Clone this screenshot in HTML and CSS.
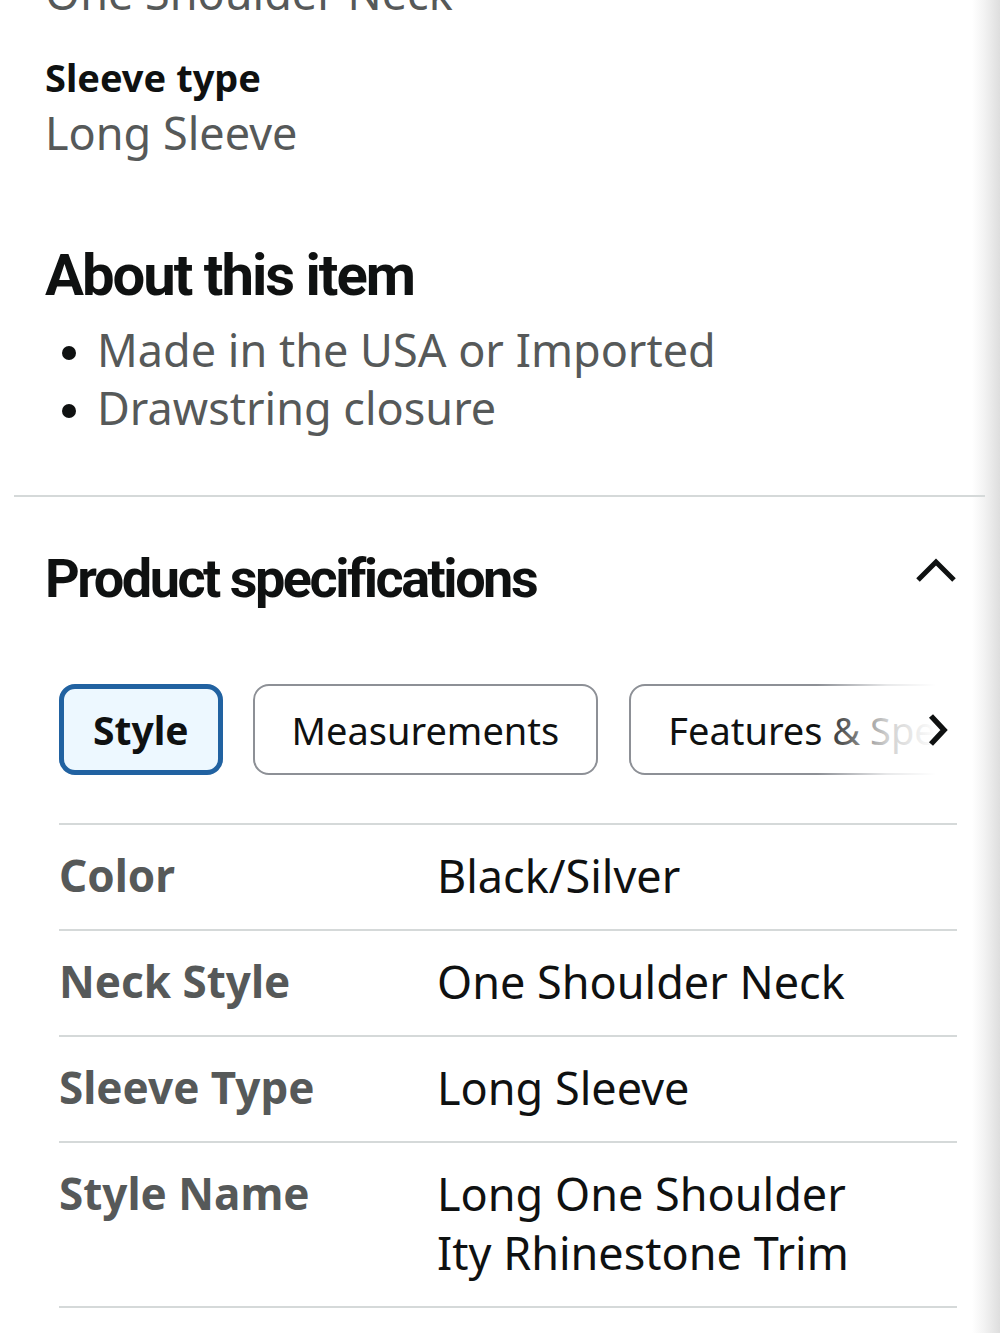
FILE: index.html
```html
<!DOCTYPE html>
<html lang="en">
<head>
<meta charset="utf-8">
<title>Product details</title>
<link rel="stylesheet" href="styles.css">
</head>
<body>
<div class="page">
  <div class="attrs">
    <div class="attr-value attr-cut">One Shoulder Neck</div>
    <div class="attr">
      <div class="attr-label">Sleeve type</div>
      <div class="attr-value">Long Sleeve</div>
    </div>
  </div>

  <section class="about">
    <h2 class="heading">About this item</h2>
    <ul class="bullets">
      <li>Made in the USA or Imported</li>
      <li>Drawstring closure</li>
    </ul>
  </section>

  <hr class="divider">

  <section class="specs">
    <div class="specs-head">
      <h2 class="heading heading-specs">Product specifications</h2>
      <svg class="chev-up" width="42" height="28" viewBox="0 0 42 28" aria-hidden="true">
        <path d="M3 24 L21 6 L39 24" fill="none" stroke="#0f1111" stroke-width="5"/>
      </svg>
    </div>

    <div class="tabs-wrap">
      <div class="tabs">
        <button class="tab tab-active">Style</button>
        <button class="tab tab-mid">Measurements</button>
        <button class="tab tab-last">Features &amp; Specs</button>
      </div>
      <div class="tabs-fade">
        <svg class="chev-right" width="22" height="34" viewBox="0 0 22 34" aria-hidden="true">
          <path d="M4 3 L17 17 L4 31" fill="none" stroke="#0f1111" stroke-width="5.5"/>
        </svg>
      </div>
    </div>

    <div class="table">
      <div class="row">
        <div class="cell-label">Color</div>
        <div class="cell-value">Black/Silver</div>
      </div>
      <div class="row">
        <div class="cell-label">Neck Style</div>
        <div class="cell-value">One Shoulder Neck</div>
      </div>
      <div class="row">
        <div class="cell-label">Sleeve Type</div>
        <div class="cell-value">Long Sleeve</div>
      </div>
      <div class="row">
        <div class="cell-label">Style Name</div>
        <div class="cell-value">Long One Shoulder<br>Ity Rhinestone Trim</div>
      </div>
    </div>
  </section>
</div>
</body>
</html>
```

FILE: styles.css
```css
html, body {
  margin: 0;
  padding: 0;
}
body {
  font-family: "Noto Sans", "Open Sans", sans-serif;
  color: #0f1111;
  background: linear-gradient(to right, #ffffff 0, #ffffff 972px, #f3f3f3 984px, #dedede 1000px);
  height: 1333px;
  overflow: hidden;
}
.page {
  padding: 0 0 0 45px;
}

.attrs {
  margin-top: -36px;
}
.attr-value {
  font-size: 45px;
  line-height: 57px;
  color: #565959;
}
.attr {
  margin-top: 29px;
}
.attr-label {
  font-size: 38px;
  font-weight: 700;
  line-height: 54px;
  color: #0f1111;
}

.about {
  margin-top: 84px;
}
.heading {
  margin: 0;
  font-family: "Roboto", "Liberation Sans", sans-serif;
  font-weight: 700;
  font-size: 58px;
  line-height: 60px;
  letter-spacing: -2px;
  color: #0f1111;
}
.bullets {
  margin: 16px 0 0 0;
  padding: 0 0 0 52px;
  font-size: 45px;
  line-height: 58px;
  color: #565959;
}
.bullets li::marker {
  color: #0f1111;
  font-size: 40px;
}

.divider {
  margin: 58px 15px 0 -31px;
  border: 0;
  height: 2px;
  background: #d5d9d9;
}

.specs-head {
  display: flex;
  align-items: flex-start;
  justify-content: space-between;
  margin-top: 52px;
  padding-right: 43px;
}
.heading-specs {
  font-size: 54px;
  letter-spacing: -2.5px;
}
.chev-up {
  display: block;
  margin-top: 7px;
}

.tabs-wrap {
  position: relative;
  margin: 75px 43px 0 14px;
  overflow: hidden;
}
.tabs {
  display: flex;
  gap: 30px;
  white-space: nowrap;
}
.tab {
  flex: none;
  height: 91px;
  padding: 0 37px;
  font-family: "Noto Sans", "Open Sans", sans-serif;
  font-size: 38px;
  color: #0f1111;
  background: #fff;
  border: 2px solid #8d9096;
  border-radius: 16px;
}
.tab-last {
  margin-left: 1px;
}
.tab-active {
  padding: 0 29px;
  font-size: 39px;
  font-weight: 700;
  background: #edf8ff;
  border: 5px solid #2162a1;
  border-radius: 16px;
}
.tabs-fade {
  position: absolute;
  top: 0;
  right: 0;
  width: 140px;
  height: 91px;
  display: flex;
  align-items: center;
  justify-content: flex-end;
  background: linear-gradient(to right, rgba(255,255,255,0) 0, rgba(255,255,255,0.8) 50%, #fff 85%);
}
.chev-right {
  display: block;
  margin-right: 8px;
}

.table {
  margin: 48px 43px 0 14px;
  border-top: 2px solid #d5d9d9;
}
.row {
  display: grid;
  grid-template-columns: 378px 1fr;
  padding: 21px 0 24px;
  border-bottom: 2px solid #d5d9d9;
}
.cell-label {
  font-size: 44px;
  font-weight: 700;
  line-height: 59px;
  color: #565959;
}
.cell-value {
  font-size: 45px;
  line-height: 59px;
  color: #0f1111;
}
```
